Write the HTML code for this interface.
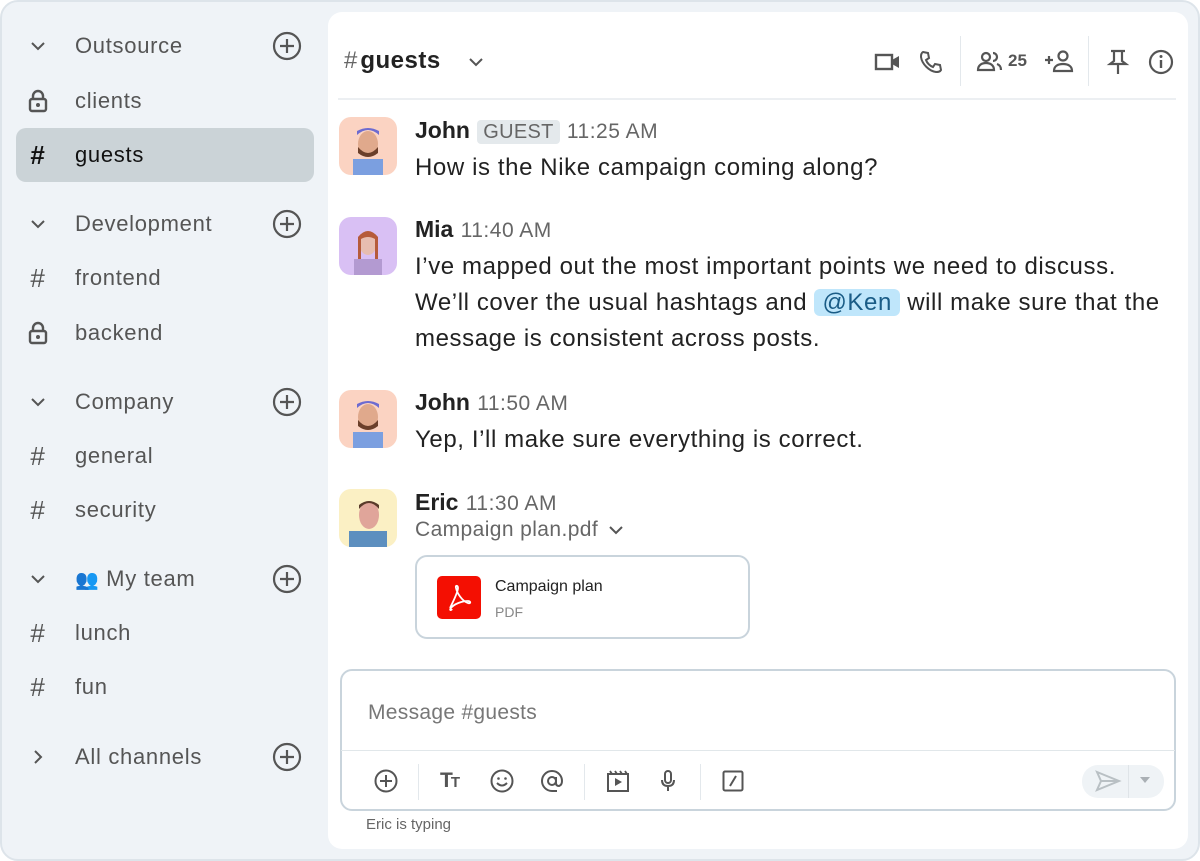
<!DOCTYPE html>
<html><head><meta charset="utf-8"><style>
*{box-sizing:border-box;margin:0;padding:0}
body{width:1200px;height:861px;background:#fff;font-family:"Liberation Sans",sans-serif;position:relative;overflow:hidden}
.frame{position:absolute;left:0;top:0;width:1200px;height:861px;background:#eff3f7;border:2px solid #dde4ea;border-radius:18px}
.main{position:absolute;left:328px;top:12px;width:860px;height:837px;background:#fff;border-radius:14px}
.sb{position:absolute;left:0;top:0;width:328px}
.row{position:absolute;left:16px;width:298px;height:54px;display:flex;align-items:center;font-size:22px;color:#555;letter-spacing:0.7px}
.row .ic{width:44px;display:flex;justify-content:center;align-items:center;margin-left:0}
.row .t{margin-left:15px}
.row .plus{position:absolute;right:12px;top:12px}
.sel{background:#cbd3d7;border-radius:10px;color:#111}
.abs{position:absolute}
.icon{stroke:#555;fill:none;stroke-width:2}
.msg{position:absolute;left:415px;font-size:24px;color:#222;line-height:36px;letter-spacing:0.6px}
.name{font-weight:bold;color:#222;font-size:23px;letter-spacing:0}
.time{color:#666;font-size:21px;font-weight:normal;letter-spacing:0.5px}
.av{position:absolute;left:339px;width:58px;height:58px;border-radius:12px}
</style></head><body>
<div class="frame"></div>
<div class="main"></div>

<div class="sb">
<div class="row" style="top:19px"><span class="ic"><svg width="20" height="20" viewBox="0 0 20 20" class="icon"><path d="M4 7l6 6 6-6"/></svg></span><span class="t">Outsource</span><svg class="plus" width="30" height="30" viewBox="0 0 30 30"><circle cx="15" cy="15" r="13" fill="none" stroke="#555" stroke-width="2.2"/><path d="M15 8v14M8 15h14" stroke="#555" stroke-width="2.2"/></svg></div>
<div class="row" style="top:74px"><span class="ic"><svg width="22" height="24" viewBox="0 0 22 24"><path d="M6 10V7a5 5 0 0110 0v3" fill="none" stroke="#555" stroke-width="2.4"/><rect x="3" y="10" width="16" height="12" rx="2" fill="none" stroke="#555" stroke-width="2.4"/><circle cx="11" cy="16" r="2" fill="#555"/></svg></span><span class="t">clients</span></div>
<div class="row sel" style="top:128px"><span class="ic" style="font-size:26px;font-weight:bold;color:#111">#</span><span class="t">guests</span></div>

<div class="row" style="top:197px"><span class="ic"><svg width="20" height="20" viewBox="0 0 20 20" class="icon"><path d="M4 7l6 6 6-6"/></svg></span><span class="t">Development</span><svg class="plus" width="30" height="30" viewBox="0 0 30 30"><circle cx="15" cy="15" r="13" fill="none" stroke="#555" stroke-width="2.2"/><path d="M15 8v14M8 15h14" stroke="#555" stroke-width="2.2"/></svg></div>
<div class="row" style="top:251px"><span class="ic" style="font-size:26px;color:#555">#</span><span class="t">frontend</span></div>
<div class="row" style="top:306px"><span class="ic"><svg width="22" height="24" viewBox="0 0 22 24"><path d="M6 10V7a5 5 0 0110 0v3" fill="none" stroke="#555" stroke-width="2.4"/><rect x="3" y="10" width="16" height="12" rx="2" fill="none" stroke="#555" stroke-width="2.4"/><circle cx="11" cy="16" r="2" fill="#555"/></svg></span><span class="t">backend</span></div>

<div class="row" style="top:375px"><span class="ic"><svg width="20" height="20" viewBox="0 0 20 20" class="icon"><path d="M4 7l6 6 6-6"/></svg></span><span class="t">Company</span><svg class="plus" width="30" height="30" viewBox="0 0 30 30"><circle cx="15" cy="15" r="13" fill="none" stroke="#555" stroke-width="2.2"/><path d="M15 8v14M8 15h14" stroke="#555" stroke-width="2.2"/></svg></div>
<div class="row" style="top:429px"><span class="ic" style="font-size:26px;color:#555">#</span><span class="t">general</span></div>
<div class="row" style="top:483px"><span class="ic" style="font-size:26px;color:#555">#</span><span class="t">security</span></div>

<div class="row" style="top:552px"><span class="ic"><svg width="20" height="20" viewBox="0 0 20 20" class="icon"><path d="M4 7l6 6 6-6"/></svg></span><span class="t"><span style="font-size:19px">👥</span> My team</span><svg class="plus" width="30" height="30" viewBox="0 0 30 30"><circle cx="15" cy="15" r="13" fill="none" stroke="#555" stroke-width="2.2"/><path d="M15 8v14M8 15h14" stroke="#555" stroke-width="2.2"/></svg></div>
<div class="row" style="top:606px"><span class="ic" style="font-size:26px;color:#555">#</span><span class="t">lunch</span></div>
<div class="row" style="top:660px"><span class="ic" style="font-size:26px;color:#555">#</span><span class="t">fun</span></div>
<div class="row" style="top:730px"><span class="ic"><svg width="20" height="20" viewBox="0 0 20 20" class="icon"><path d="M7 4l6 6-6 6"/></svg></span><span class="t">All channels</span><svg class="plus" width="30" height="30" viewBox="0 0 30 30"><circle cx="15" cy="15" r="13" fill="none" stroke="#555" stroke-width="2.2"/><path d="M15 8v14M8 15h14" stroke="#555" stroke-width="2.2"/></svg></div>
</div>

<!-- header -->
<div class="abs" style="left:344px;top:47px;font-size:24px;font-weight:bold;color:#222;letter-spacing:0.5px"><span style="color:#666;font-weight:normal">#</span>&#8202;guests</div>
<svg class="abs" style="left:466px;top:53px" width="20" height="18" viewBox="0 0 20 18"><path d="M4 6l6 6 6-6" fill="none" stroke="#555" stroke-width="2"/></svg>
<svg class="abs" style="left:874px;top:50px" width="28" height="24" viewBox="0 0 28 24"><rect x="2" y="5" width="16" height="14" fill="none" stroke="#555" stroke-width="2.4"/><path d="M18 10l7-4v12l-7-4z" fill="#555"/></svg>
<svg class="abs" style="left:918px;top:49px" width="26" height="26" viewBox="0 0 26 26"><path d="M5 3l5 1 1 5-3 2c1 3 4 6 7 7l2-3 5 1 1 5c-1 2-3 2-5 2C11 22 4 15 3 8c0-2 0-4 2-5z" fill="none" stroke="#555" stroke-width="2"/></svg>
<div class="abs" style="left:960px;top:36px;width:1px;height:50px;background:#e3e8ec"></div>
<svg class="abs" style="left:976px;top:50px" width="28" height="24" viewBox="0 0 28 24"><circle cx="10" cy="7" r="4" fill="none" stroke="#555" stroke-width="2.2"/><path d="M2 20c0-5 4-7 8-7s8 2 8 7z" fill="none" stroke="#555" stroke-width="2.2"/><path d="M17 3a4 4 0 010 8M21 14c3 1 4 3 4 6" fill="none" stroke="#555" stroke-width="2.2"/></svg>
<div class="abs" style="left:1008px;top:51px;font-size:17px;color:#555;font-weight:bold">25</div>
<svg class="abs" style="left:1044px;top:48px" width="32" height="26" viewBox="0 0 32 26"><path d="M1 12h8M5 8v8" stroke="#555" stroke-width="2.2"/><circle cx="19" cy="8" r="4.5" fill="none" stroke="#555" stroke-width="2.2"/><path d="M10 23c0-5 4-7 9-7s9 2 9 7z" fill="none" stroke="#555" stroke-width="2.2"/></svg>
<div class="abs" style="left:1088px;top:36px;width:1px;height:50px;background:#e3e8ec"></div>
<svg class="abs" style="left:1106px;top:48px" width="24" height="28" viewBox="0 0 24 28"><path d="M5 3h14M8 3v10l-4 3h16l-4-3V3M12 16v10" fill="none" stroke="#555" stroke-width="2.2"/></svg>
<svg class="abs" style="left:1148px;top:49px" width="26" height="26" viewBox="0 0 26 26"><circle cx="13" cy="13" r="11" fill="none" stroke="#555" stroke-width="2.2"/><path d="M13 11v8" stroke="#555" stroke-width="2.4"/><circle cx="13" cy="7.5" r="1.5" fill="#555"/></svg>
<div class="abs" style="left:338px;top:98px;width:838px;height:2px;background:#eceff2"></div>

<!-- messages -->
<div class="av" style="top:117px;background:#fbd3c2"><svg width="58" height="58" viewBox="0 0 58 58"><rect x="14" y="42" width="30" height="16" fill="#7b9fe0"/><ellipse cx="29" cy="27" rx="10" ry="13" fill="#e0a98c"/><path d="M19 30q10 12 20 0v6q-10 8-20 0z" fill="#6b3f2a"/><path d="M18 18q11-10 22 0v-4q-11-6-22 0z" fill="#6d6bd0"/></svg></div>
<div class="msg" style="top:112px"><span class="name">John</span> <span style="background:#e4e9ec;color:#666;font-size:20px;padding:1px 6px;border-radius:4px;letter-spacing:0.3px">GUEST</span> <span class="time">11:25 AM</span><br>How is the Nike campaign coming along?</div>

<div class="av" style="top:217px;background:#d9c0f4"><svg width="58" height="58" viewBox="0 0 58 58"><rect x="15" y="42" width="28" height="16" fill="#b39ad1"/><ellipse cx="29" cy="26" rx="9" ry="12" fill="#e7bdb0"/><path d="M19 20q10-12 20 0v22h-3V22q-7-4-14 0v20h-3z" fill="#b65b3b"/></svg></div>
<div class="msg" style="top:211px"><span class="name">Mia</span> <span class="time">11:40 AM</span><br>I’ve mapped out the most important points we need to discuss.<br>We’ll cover the usual hashtags and <span style="background:#bfe6fb;color:#1a5c86;padding:0 8px;border-radius:6px">@Ken</span> will make sure that the<br>message is consistent across posts.</div>

<div class="av" style="top:390px;background:#fbd3c2"><svg width="58" height="58" viewBox="0 0 58 58"><rect x="14" y="42" width="30" height="16" fill="#7b9fe0"/><ellipse cx="29" cy="27" rx="10" ry="13" fill="#e0a98c"/><path d="M19 30q10 12 20 0v6q-10 8-20 0z" fill="#6b3f2a"/><path d="M18 18q11-10 22 0v-4q-11-6-22 0z" fill="#6d6bd0"/></svg></div>
<div class="msg" style="top:384px"><span class="name">John</span> <span class="time">11:50 AM</span><br>Yep, I’ll make sure everything is correct.</div>

<div class="av" style="top:489px;background:#fbf0c4"><svg width="58" height="58" viewBox="0 0 58 58"><rect x="10" y="42" width="38" height="16" fill="#5d8fbf"/><ellipse cx="30" cy="26" rx="10" ry="14" fill="#e0a59a"/><path d="M20 20q10-12 20 0v-4q-10-8-20 0z" fill="#5a3b2a"/></svg></div>
<div class="msg" style="top:484px"><span class="name">Eric</span> <span class="time">11:30 AM</span></div>
<div class="abs" style="left:415px;top:518px;font-size:21px;color:#666;letter-spacing:0.4px">Campaign plan.pdf</div>
<svg class="abs" style="left:606px;top:521px" width="20" height="18" viewBox="0 0 20 18"><path d="M4 6l6 6 6-6" fill="none" stroke="#555" stroke-width="2"/></svg>
<div class="abs" style="left:415px;top:555px;width:335px;height:84px;border:2px solid #c9d4dc;border-radius:12px"></div>
<div class="abs" style="left:437px;top:576px;width:44px;height:43px;background:#f40f02;border-radius:5px"><svg width="44" height="43" viewBox="0 0 44 43"><path d="M13 32c3-6 8-16 8-20 0-3-3-3-2 0 1 5 6 13 12 15 3 1 3-2 0-2-6 0-14 3-17 7-2 2 0 3 1 1" fill="none" stroke="#fff" stroke-width="1.8"/></svg></div>
<div class="abs" style="left:495px;top:578px;font-size:16px;color:#222">Campaign plan</div>
<div class="abs" style="left:495px;top:604px;font-size:14px;color:#888">PDF</div>

<!-- input -->
<div class="abs" style="left:340px;top:669px;width:836px;height:142px;border:2px solid #c9d4dc;border-radius:12px"></div>
<div class="abs" style="left:341px;top:750px;width:834px;height:1px;background:#e1e7ea"></div>
<div class="abs" style="left:368px;top:701px;font-size:21px;color:#777;letter-spacing:0.3px">Message #guests</div>
<svg class="abs" style="left:374px;top:769px" width="24" height="24" viewBox="0 0 24 24"><circle cx="12" cy="12" r="10.5" fill="none" stroke="#555" stroke-width="2"/><path d="M12 6v12M6 12h12" stroke="#555" stroke-width="2"/></svg>
<div class="abs" style="left:418px;top:764px;width:1px;height:36px;background:#e3e8ec"></div>
<div class="abs" style="left:440px;top:769px;font-size:21px;font-weight:bold;color:#555;letter-spacing:-2px">T<span style="font-size:15px">T</span></div>
<svg class="abs" style="left:490px;top:769px" width="24" height="24" viewBox="0 0 24 24"><circle cx="12" cy="12" r="10.5" fill="none" stroke="#555" stroke-width="2"/><circle cx="8.5" cy="9.5" r="1.3" fill="#555"/><circle cx="15.5" cy="9.5" r="1.3" fill="#555"/><path d="M7 14q5 5 10 0" fill="none" stroke="#555" stroke-width="2"/></svg>
<svg class="abs" style="left:540px;top:769px" width="24" height="24" viewBox="0 0 24 24"><circle cx="12" cy="12" r="4" fill="none" stroke="#555" stroke-width="2"/><path d="M16 8v6q0 3 3 3 3-1 3-5A10 10 0 1012 22h5" fill="none" stroke="#555" stroke-width="2"/></svg>
<div class="abs" style="left:584px;top:764px;width:1px;height:36px;background:#e3e8ec"></div>
<svg class="abs" style="left:605px;top:768px" width="26" height="26" viewBox="0 0 26 26"><rect x="3" y="6" width="20" height="17" fill="none" stroke="#555" stroke-width="2"/><path d="M5 3l2 3M10 3l2 3M15 3l2 3M20 3l2 3" stroke="#555" stroke-width="1.8"/><path d="M10 10l7 4-7 4z" fill="#555"/></svg>
<svg class="abs" style="left:656px;top:768px" width="24" height="26" viewBox="0 0 24 26"><rect x="9" y="3" width="6" height="12" rx="3" fill="none" stroke="#555" stroke-width="2"/><path d="M6 12q0 6 6 6t6-6M12 18v5" fill="none" stroke="#555" stroke-width="2"/></svg>
<div class="abs" style="left:700px;top:764px;width:1px;height:36px;background:#e3e8ec"></div>
<svg class="abs" style="left:721px;top:769px" width="24" height="24" viewBox="0 0 24 24"><rect x="2.5" y="2.5" width="19" height="19" rx="1.5" fill="none" stroke="#555" stroke-width="2"/><path d="M15 7l-6 10" stroke="#555" stroke-width="2"/></svg>
<div class="abs" style="left:1082px;top:765px;width:82px;height:33px;background:#eff3f6;border-radius:16px"></div>
<div class="abs" style="left:1128px;top:765px;width:1px;height:33px;background:#dfe4e8"></div>
<svg class="abs" style="left:1094px;top:769px" width="28" height="24" viewBox="0 0 28 24"><path d="M3 3l22 9-22 9 4-9zM7 12h17" fill="none" stroke="#b9c0c4" stroke-width="2"/></svg>
<svg class="abs" style="left:1139px;top:776px" width="12" height="8" viewBox="0 0 12 8"><path d="M1 1h10L6 7z" fill="#aab0b5"/></svg>
<div class="abs" style="left:366px;top:816px;font-size:15px;color:#666">Eric is typing</div>
</body></html>
